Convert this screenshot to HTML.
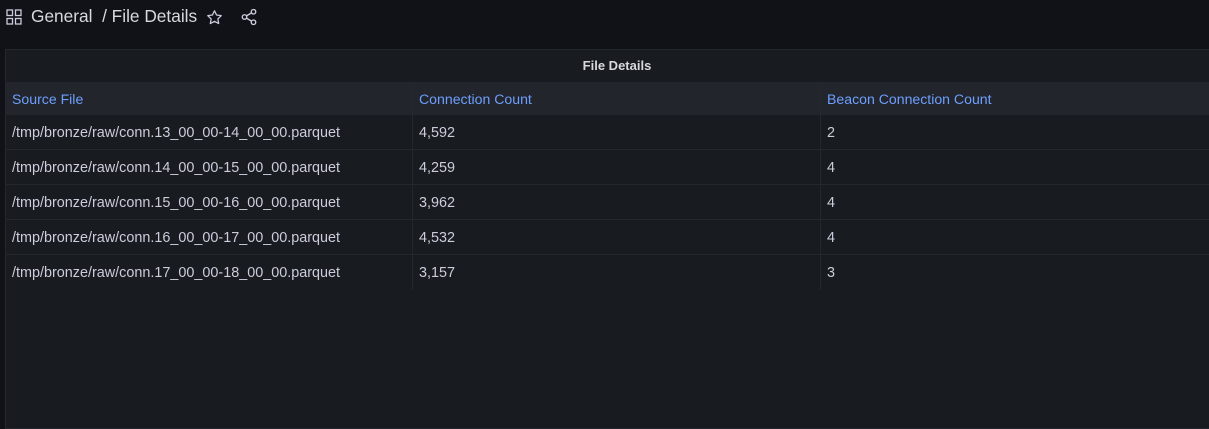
<!DOCTYPE html><html><head><style>
body{margin:0;background:#111217;width:1209px;height:422px;overflow:hidden;font-family:"Liberation Sans",sans-serif;color:#ccccdc}
.top{position:absolute;left:0;top:0;height:36px;width:1209px}
.t{position:absolute;top:6px;left:31px;font-size:17.3px;color:#d8d9e0}
.panel{position:absolute;left:5px;top:49px;width:1210px;height:380px;background:#181b1f;border:1px solid #24272d;box-sizing:border-box}
.title{height:32px;line-height:31px;text-align:center;font-size:13px;font-weight:bold;color:#d8d9e0;padding-left:14px}
.row{display:flex;height:35px;border-bottom:1px solid #24272d;box-sizing:border-box;font-size:14.4px;line-height:37px}
.row div{box-sizing:border-box;padding-left:6px;border-right:1px solid #24272d}
.c1{width:407px}.c2{width:408px}.c3{flex:1;border-right:none!important}
.hd{background:#22252b;color:#6e9fff;border-bottom:none;height:33px;line-height:35px;font-size:14.1px}
</style></head><body>
<div class="top">
<svg style="position:absolute;left:6px;top:9px" width="16" height="16" viewBox="0 0 16 16" fill="none" stroke="#ccccdc" stroke-width="1.3"><rect x="1" y="1" width="5.5" height="5.5"/><rect x="9.5" y="1" width="5.5" height="5.5"/><rect x="1" y="9.5" width="5.5" height="5.5"/><rect x="9.5" y="9.5" width="5.5" height="5.5"/></svg>
<div class="t">General&nbsp; / File Details</div>
<svg style="position:absolute;left:206px;top:9px" width="17" height="17" viewBox="0 0 24 24" fill="none" stroke="#ccccdc" stroke-width="1.8" stroke-linejoin="round"><path d="M12 2.5l2.9 6 6.6.9-4.8 4.6 1.2 6.5L12 17.4l-5.9 3.1 1.2-6.5L2.5 9.4l6.6-.9z"/></svg>
<svg style="position:absolute;left:240px;top:8px" width="18" height="18" viewBox="0 0 24 24" fill="none" stroke="#ccccdc" stroke-width="1.8"><circle cx="18" cy="5" r="3"/><circle cx="6" cy="12" r="3"/><circle cx="18" cy="19" r="3"/><path d="M8.6 10.5l6.8-4M8.6 13.5l6.8 4"/></svg>
</div>
<div class="panel">
<div class="title">File Details</div>
<div class="row hd"><div class="c1">Source File</div><div class="c2">Connection Count</div><div class="c3">Beacon Connection Count</div></div>
<div class="row"><div class="c1">/tmp/bronze/raw/conn.13_00_00-14_00_00.parquet</div><div class="c2">4,592</div><div class="c3">2</div></div>
<div class="row"><div class="c1">/tmp/bronze/raw/conn.14_00_00-15_00_00.parquet</div><div class="c2">4,259</div><div class="c3">4</div></div>
<div class="row"><div class="c1">/tmp/bronze/raw/conn.15_00_00-16_00_00.parquet</div><div class="c2">3,962</div><div class="c3">4</div></div>
<div class="row"><div class="c1">/tmp/bronze/raw/conn.16_00_00-17_00_00.parquet</div><div class="c2">4,532</div><div class="c3">4</div></div>
<div class="row" style="border-bottom:none"><div class="c1">/tmp/bronze/raw/conn.17_00_00-18_00_00.parquet</div><div class="c2">3,157</div><div class="c3">3</div></div>
</div>
</body></html>
